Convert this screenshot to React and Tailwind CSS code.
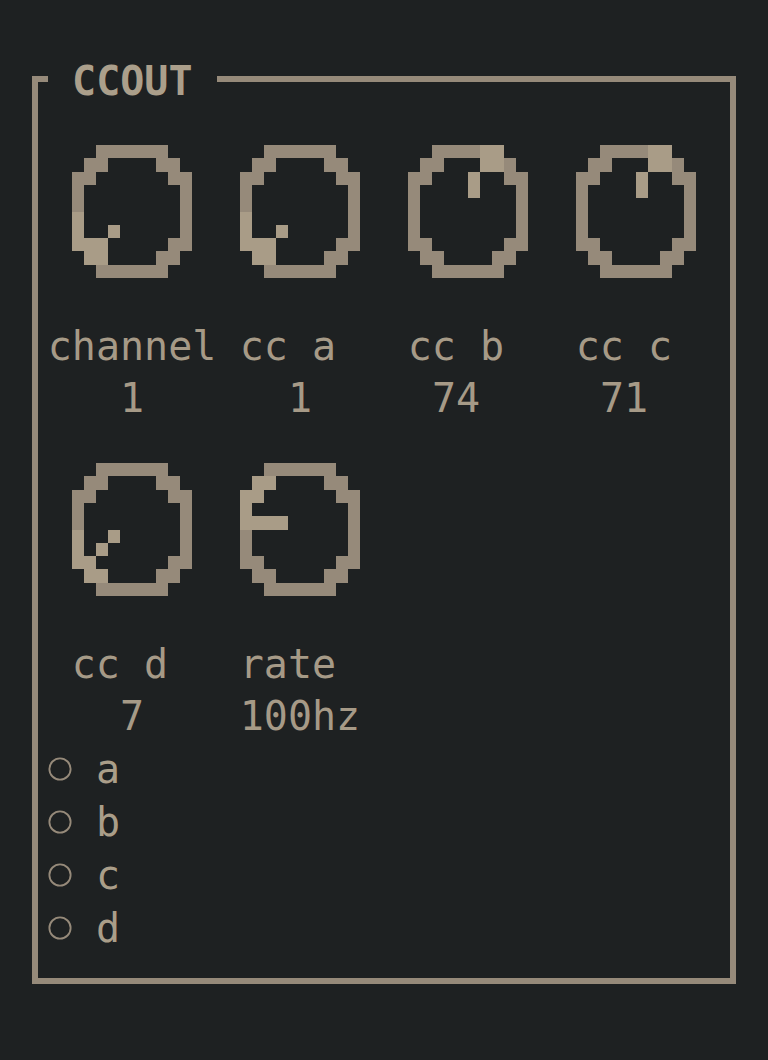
import React from "react";

const RING = "#968a7a";
const LIT = "#a99c87";

// base ring of every knob, [col,row] on a 10x10 grid
const ring = [];
for (let c = 2; c <= 7; c++) ring.push([c, 0], [c, 9]);
[[1, 1], [2, 1], [7, 1], [8, 1], [0, 2], [1, 2], [8, 2], [9, 2]].forEach((p) => ring.push(p));
[[1, 8], [2, 8], [7, 8], [8, 8], [0, 7], [1, 7], [8, 7], [9, 7]].forEach((p) => ring.push(p));
for (let r = 3; r <= 6; r++) ring.push([0, r], [9, r]);

const pointers = {
  min: [[0, 5], [0, 6], [0, 7], [1, 7], [2, 7], [1, 8], [2, 8], [3, 6]],
  low: [[0, 5], [0, 6], [0, 7], [1, 7], [1, 8], [2, 8], [3, 5], [2, 6]],
  mid: [[1, 1], [2, 1], [0, 2], [1, 2], [0, 3], [0, 4], [1, 4], [2, 4], [3, 4]],
  high: [[6, 0], [7, 0], [6, 1], [7, 1], [5, 2], [5, 3]],
};

function Knob({ pointer }) {
  return (
    <svg width="120" height="133" viewBox="0 0 10 10" preserveAspectRatio="none" shapeRendering="crispEdges">
      {ring.map(([c, r]) => (
        <rect key={`r${c}-${r}`} x={c} y={r} width="1" height="1" fill={RING} />
      ))}
      {pointers[pointer].map(([c, r]) => (
        <rect key={`p${c}-${r}`} x={c} y={r} width="1" height="1" fill={LIT} />
      ))}
    </svg>
  );
}

const knobs = [
  { label: "channel", value: "1", pointer: "min" },
  { label: "cc a\u00a0", value: "1", pointer: "min" },
  { label: "cc b\u00a0", value: "74\u00a0", pointer: "high" },
  { label: "cc c\u00a0", value: "71\u00a0", pointer: "high" },
  { label: "cc d\u00a0", value: "7", pointer: "low" },
  { label: "rate\u00a0", value: "100hz", pointer: "mid" },
];

export default function App() {
  return (
    <div
      className="min-h-[1060px] w-[768px] bg-[#1e2122] pt-[76px] pl-[32px] text-[40px] leading-[52px] text-[#a69a87]"
      style={{ fontFamily: '"DejaVu Sans Mono", "Liberation Mono", monospace' }}
    >
      <div className="relative w-[704px] h-[908px] border-[6px] border-[#968a7a] pl-[10px] pt-[63px]">
        <span className="absolute left-[10px] top-[-27px] bg-[#1e2122] whitespace-pre font-bold text-[#ab9f8b]">
          {" CCOUT "}
        </span>

        <div className="grid grid-cols-[repeat(4,168px)] gap-y-[39px]">
          {knobs.map((k, i) => (
            <div key={i} className="flex flex-col items-center">
              <Knob pointer={k.pointer} />
              <div className="mt-[42px] whitespace-pre">{k.label}</div>
              <div className="whitespace-pre">{k.value}</div>
            </div>
          ))}
        </div>

        {/* output selectors */}
        <div className="mt-[3px] flex flex-col">
          {["a", "b", "c", "d"].map((o) => (
            <div key={o} className="flex h-[53px] items-start">
              <div className="w-[24px] h-[53px] flex justify-center">
                <svg width="26" height="26" viewBox="0 0 26 26" className="mt-[11px]">
                  <circle cx="13" cy="13" r="11.5" fill="none" stroke={RING} strokeWidth="2" />
                </svg>
              </div>
              <span className="ml-[24px] leading-[49px] text-[#aa9e89]">{o}</span>
            </div>
          ))}
        </div>
      </div>
    </div>
  );
}
